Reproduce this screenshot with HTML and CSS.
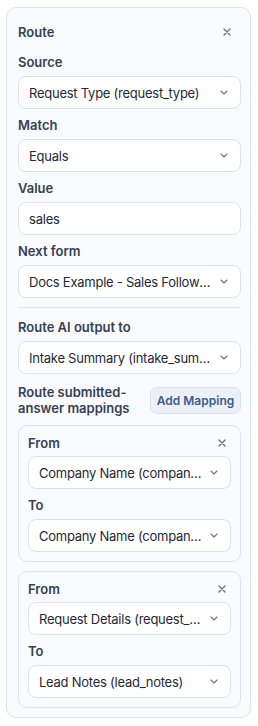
FILE: index.html
```html
<!DOCTYPE html>
<html>
  <head>
    <meta charset="utf-8" />
    <meta name="viewport" content="width=device-width, initial-scale=1.0">
    <title>Route</title>
    <link rel="stylesheet" href="styles.css">
  </head>
  <body>
    <div class="route_card">
      <div class="card_head">
        <span class="card_title">Route</span>
        <button class="close_btn close_main" aria-label="Remove route">
          <svg width="8" height="8" viewBox="0 0 8 8"><path d="M1 1L7 7M7 1L1 7" /></svg>
        </button>
      </div>

      <div class="field">
        <div class="field_label">Source</div>
        <div class="select_box">
          <span class="select_text">Request Type (request_type)</span>
          <svg class="chevron" width="8" height="5" viewBox="0 0 8 5"><path d="M1 1L4 4L7 1" /></svg>
        </div>
      </div>

      <div class="field">
        <div class="field_label">Match</div>
        <div class="select_box">
          <span class="select_text">Equals</span>
          <svg class="chevron" width="8" height="5" viewBox="0 0 8 5"><path d="M1 1L4 4L7 1" /></svg>
        </div>
      </div>

      <div class="field">
        <div class="field_label">Value</div>
        <input type="text" class="text_input" value="sales" />
      </div>

      <div class="field">
        <div class="field_label">Next form</div>
        <div class="select_box">
          <span class="select_text">Docs Example - Sales Follow-up</span>
          <svg class="chevron" width="8" height="5" viewBox="0 0 8 5"><path d="M1 1L4 4L7 1" /></svg>
        </div>
      </div>

      <div class="divider"></div>

      <div class="field">
        <div class="field_label">Route AI output to</div>
        <div class="select_box">
          <span class="select_text">Intake Summary (intake_summary)</span>
          <svg class="chevron" width="8" height="5" viewBox="0 0 8 5"><path d="M1 1L4 4L7 1" /></svg>
        </div>
      </div>

      <div class="mapping_head">
        <div class="mapping_title">Route submitted-answer mappings</div>
        <button class="add_btn">Add Mapping</button>
      </div>

      <div class="mapping_card">
        <div class="mapping_row">
          <span class="field_label">From</span>
          <button class="close_btn" aria-label="Remove mapping">
            <svg width="8" height="8" viewBox="0 0 8 8"><path d="M1 1L7 7M7 1L1 7" /></svg>
          </button>
        </div>
        <div class="select_box">
          <span class="select_text">Company Name (company_name)</span>
          <svg class="chevron" width="8" height="5" viewBox="0 0 8 5"><path d="M1 1L4 4L7 1" /></svg>
        </div>
        <div class="field_label to_label">To</div>
        <div class="select_box">
          <span class="select_text">Company Name (company_name)</span>
          <svg class="chevron" width="8" height="5" viewBox="0 0 8 5"><path d="M1 1L4 4L7 1" /></svg>
        </div>
      </div>

      <div class="mapping_card">
        <div class="mapping_row">
          <span class="field_label">From</span>
          <button class="close_btn" aria-label="Remove mapping">
            <svg width="8" height="8" viewBox="0 0 8 8"><path d="M1 1L7 7M7 1L1 7" /></svg>
          </button>
        </div>
        <div class="select_box">
          <span class="select_text">Request Details (request_details)</span>
          <svg class="chevron" width="8" height="5" viewBox="0 0 8 5"><path d="M1 1L4 4L7 1" /></svg>
        </div>
        <div class="field_label to_label">To</div>
        <div class="select_box">
          <span class="select_text">Lead Notes (lead_notes)</span>
          <svg class="chevron" width="8" height="5" viewBox="0 0 8 5"><path d="M1 1L4 4L7 1" /></svg>
        </div>
      </div>
    </div>
  </body>
</html>
```
FILE: styles.css
```css
body, html {
  margin: 0;
  padding: 0;
}

body {
  background: #ffffff;
  font-family: Inter, "Noto Sans", sans-serif;
  font-size: 13px;
  color: #1f2937;
}

.route_card {
  margin: 7px 6px;
  width: 245px;
  box-sizing: border-box;
  padding: 14px 9px 9px 11px;
  background: #f8fafd;
  border: 1px solid #dde4ee;
  border-radius: 10px;
  display: flex;
  flex-direction: column;
}

.card_head {
  display: flex;
  align-items: center;
  justify-content: space-between;
  height: 20px;
  margin-bottom: 10px;
}

.card_title {
  font-weight: 600;
  color: #374151;
}

.close_btn {
  border: none;
  background: none;
  padding: 0;
  width: 20px;
  height: 20px;
  display: flex;
  align-items: center;
  justify-content: center;
  cursor: pointer;
}

.close_btn svg path {
  stroke: #6b7280;
  stroke-width: 1.4;
  fill: none;
  stroke-linecap: round;
}

.close_main {
  margin-right: 4px;
}

.field {
  margin-bottom: 6px;
}

.field_label {
  font-weight: 600;
  color: #374151;
  line-height: 20px;
  margin-bottom: 4px;
}

.select_box,
.text_input {
  box-sizing: border-box;
  width: 100%;
  height: 33px;
  background: #ffffff;
  border: 1px solid #dbe2ec;
  border-radius: 8px;
  padding: 0 12px 0 10px;
  display: flex;
  align-items: center;
}

.text_input {
  font-family: inherit;
  font-size: 13px;
  color: #1f2937;
  outline: none;
  letter-spacing: -0.2px;
}

.select_text {
  flex: 1;
  min-width: 0;
  white-space: nowrap;
  overflow: hidden;
  text-overflow: ellipsis;
  margin-right: 8px;
  letter-spacing: -0.25px;
}

.chevron path {
  stroke: #6b7280;
  stroke-width: 1.1;
  fill: none;
  stroke-linecap: round;
  stroke-linejoin: round;
}

.divider {
  height: 1px;
  background: #dde4ee;
  margin: 3px 0 9px 0;
}

.mapping_head {
  display: flex;
  align-items: center;
  justify-content: space-between;
  margin: 4px 0 9px 0;
}

.mapping_title {
  font-weight: 600;
  color: #374151;
  line-height: 16px;
  max-width: 125px;
}

.add_btn {
  font-family: inherit;
  font-size: 12px;
  font-weight: 600;
  color: #3d5b8c;
  background: #ecf1f8;
  border: 1px solid #dbe3ee;
  border-radius: 7px;
  height: 27px;
  width: 91px;
  padding: 0;
  cursor: pointer;
}

.mapping_card {
  background: #f8fafd;
  border: 1px solid #dde4ee;
  border-radius: 9px;
  padding: 7px 9px 9px 9px;
  margin-bottom: 9px;
}

.mapping_card:last-child {
  margin-bottom: 0;
}

.mapping_row {
  display: flex;
  align-items: center;
  justify-content: space-between;
  height: 20px;
  margin-bottom: 3px;
}

.mapping_row .field_label {
  margin-bottom: 0;
}

.mapping_row .close_btn {
  margin-right: -1px;
}

.to_label {
  margin-top: 6px;
}
```
